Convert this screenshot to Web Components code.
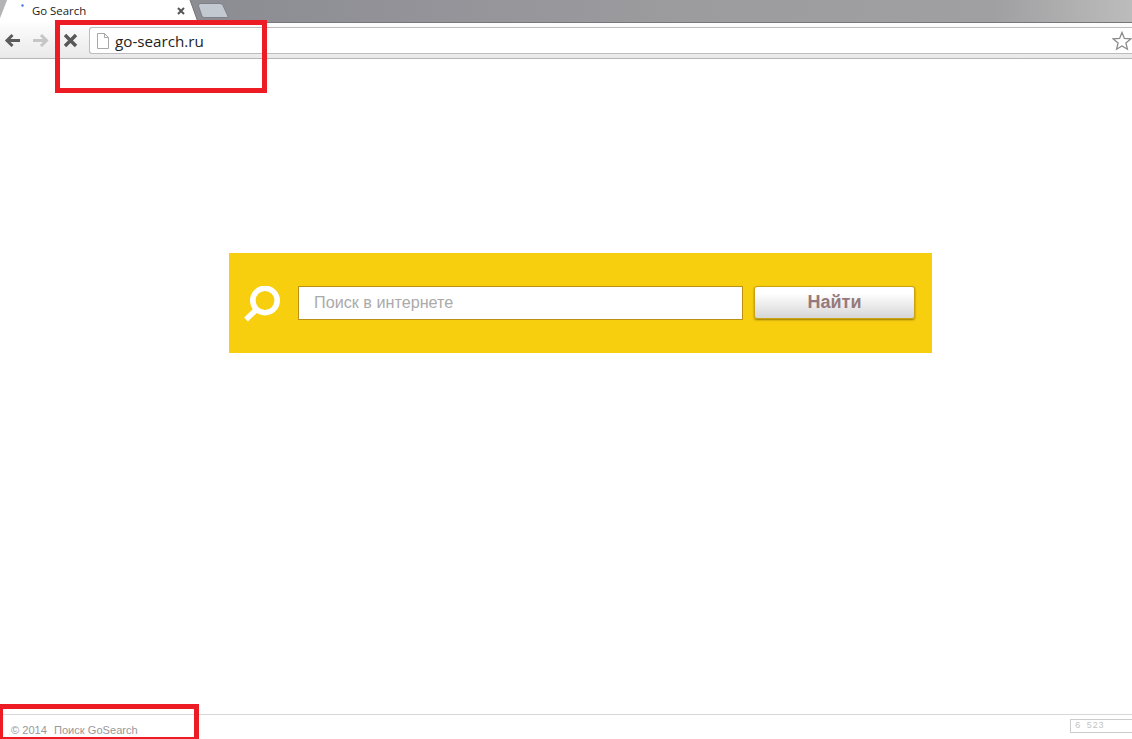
<!DOCTYPE html>
<html>
<head>
<meta charset="utf-8">
<title>Go Search</title>
<style>
    html, body { margin: 0; height: 100%; overflow: hidden; background: #fff; }
    body { display: flex; flex-direction: column; height: 739px; font-family: "Liberation Sans", Arial, sans-serif; }
</style>
</head>
<body>
<browser-bar url="go-search.ru" tab="Go Search"></browser-bar>
<search-page>
    <search-panel placeholder="Поиск в интернете" action="Найти"></search-panel>
</search-page>
<page-footer copy="© 2014" link="Поиск GoSearch" count="6 523"></page-footer>
<red-box style="left:55px;top:20px;width:212px;height:73px"></red-box>
<red-box style="left:-2px;top:704px;width:201px;height:38px"></red-box>

<script>
class BrowserBar extends HTMLElement {
    connectedCallback() {
        this.attachShadow({ mode: 'open' });
        this.shadowRoot.innerHTML = `
            <style>
                :host { display: block; flex: none; height: 59px; font-family: "Open Sans", "Noto Sans", sans-serif; }
                .strip {
                    height: 23px;
                    box-sizing: border-box;
                    border-bottom: 1px solid #77777b;
                    background: linear-gradient(90deg, #88888f 0%, #8e8e95 25%, #9c9c9f 60%, #a0a0a2 88%, #bcbcbc 100%);
                    position: relative;
                }
                .tabs { display: block; position: absolute; left: 0; top: 0; }
                .title {
                    position: absolute; left: 32px; top: 3px;
                    font-size: 11.4px; line-height: 16px; color: #222;
                }
                .toolbar {
                    height: 35px;
                    box-sizing: border-box;
                    display: flex;
                    align-items: center;
                    padding-left: 3px;
                    background: linear-gradient(#fdfdfd, #e9e9e9);
                }
                .btn { width: 20px; height: 21px; flex: none; }
                .fwd { margin-left: 8px; }
                .stop { margin-left: 10px; }
                .omni {
                    flex: 1;
                    height: 27px;
                    box-sizing: border-box;
                    margin-left: 8px;
                    display: flex;
                    align-items: center;
                    gap: 6px;
                    padding-left: 7px;
                    background: #fff;
                    border: 1px solid #bdbdbd;
                    border-right: 0;
                    border-radius: 3px 0 0 3px;
                    font-size: 15.2px;
                    color: #222;
                }
                .star { margin-left: auto; flex: none; margin-right: 0; }
                .edge { height: 1px; background: #b4b4b4; }
            </style>
            <div class="strip">
                <svg class="tabs" width="232" height="23" viewBox="0 0 232 23">
                    <path d="M0 0H7L0 18Z" fill="#b4b4b6"/>
                    <path d="M0 23V18L7 0H190L198 23Z" fill="#fff"/>
                    <path d="M190 0L198 22" fill="none" stroke="#77777b"/>
                    <path d="M201 3.500H220Q222 3.500 223 5.500L228.500 17.500H204Q202.500 17.500 202 16L198.500 6Q198 3.500 201 3.500Z" fill="#c3c9d1" stroke="#80808a"/>
                    <circle cx="22.500" cy="5.500" r="1.200" fill="#3f7fe0"/>
                    <path d="M178 8l6 6m0-6l-6 6" stroke="#555" stroke-width="2"/>
                </svg>
                <div class="title">${this.getAttribute('tab')}</div>
            </div>
            <div class="toolbar">
                <svg class="btn" viewBox="0 0 20 21"><path d="M17 10.500H4M9.500 5L4 10.500l5.500 5.500" fill="none" stroke="#5c5c5c" stroke-width="3"/></svg>
                <svg class="btn fwd" viewBox="0 0 20 21"><path d="M2 10.500H15.500M10 5l5.500 5.500L10 16" fill="none" stroke="#c6c6c6" stroke-width="3"/></svg>
                <svg class="btn stop" viewBox="0 0 20 21"><path d="M4 5L15 16M15 5L4 16" fill="none" stroke="#585858" stroke-width="3.400"/></svg>
                <div class="omni">
                    <svg width="12" height="16" viewBox="0 0 12 16"><path d="M.5 .5H7.500L11.500 4.500V15.500H.5Z M7.500 .5V4.500H11.500" fill="#fff" stroke="#a8a8a8"/></svg>
                    <span>${this.getAttribute('url')}</span>
                    <svg class="star" width="20" height="20" viewBox="0 0 20 20"><path d="M10 1.500L12.400 7.400 18.700 7.900 13.900 12 15.400 18.200 10 14.900 4.600 18.200 6.100 12 1.300 7.900 7.600 7.400Z" fill="#fff" stroke="#8a8a8a" stroke-width="1.300"/></svg>
                </div>
            </div>
            <div class="edge"></div>
        `;
    }
}

class SearchPage extends HTMLElement {
    connectedCallback() {
        this.attachShadow({ mode: 'open' });
        this.shadowRoot.innerHTML = `
            <style>
                :host { display: block; flex: 1; padding: 194px 0 0 229px; background: #fff; }
            </style>
            <slot></slot>
        `;
    }
}

class SearchPanel extends HTMLElement {
    connectedCallback() {
        this.attachShadow({ mode: 'open' });
        this.shadowRoot.innerHTML = `
            <style>
                :host {
                    display: flex;
                    width: 703px;
                    height: 100px;
                    box-sizing: border-box;
                    padding: 33px 17px 33px 15px;
                    background: #f7cf0f;
                    font-family: "Liberation Sans", Arial, sans-serif;
                }
                svg { flex: none; margin-right: 18px; }
                .field {
                    flex: none;
                    width: 445px;
                    box-sizing: border-box;
                    height: 34px;
                    background: #fff;
                    border: 1px solid #bb9013;
                    padding-left: 15px;
                    font-size: 16.2px;
                    line-height: 30px;
                    color: #aaa;
                }
                .go {
                    flex: none;
                    width: 161px;
                    height: 33px;
                    margin-left: 11px;
                    box-sizing: border-box;
                    text-align: center;
                    font-size: 18px;
                    font-weight: bold;
                    line-height: 30px;
                    color: #96797c;
                    border: 1px solid #c9a215;
                    border-radius: 3px;
                    background: linear-gradient(#ffffff 20%, #d6d6d6);
                    box-shadow: 0 1px 2px rgba(110, 85, 0, .7);
                }
            </style>
            <svg width="36" height="36" viewBox="0 0 36 36">
                <circle cx="21" cy="14.500" r="12.200" fill="none" stroke="#fff" stroke-width="5.600"/>
                <path d="M12.500 23.500L2 33.500" stroke="#fff" stroke-width="5.500"/>
            </svg>
            <div class="field">${this.getAttribute('placeholder')}</div>
            <div class="go">${this.getAttribute('action')}</div>
        `;
    }
}

class PageFooter extends HTMLElement {
    connectedCallback() {
        this.attachShadow({ mode: 'open' });
        this.shadowRoot.innerHTML = `
            <style>
                :host {
                    display: flex;
                    flex: none;
                    height: 25px;
                    box-sizing: border-box;
                    align-items: flex-start;
                    border-top: 1px solid #d8d8d8;
                    font-family: "Liberation Sans", Arial, sans-serif;
                    font-size: 11.1px;
                    color: #999;
                    padding-left: 11px;
                }
                .copy { margin-top: 9px; line-height: 13px; }
                .link { margin: 9px 0 0 7px; line-height: 13px; }
                .count {
                    margin: 4px 0 0 auto;
                    width: 62px;
                    height: 14px;
                    box-sizing: border-box;
                    border: 1px solid #ccc;
                    border-right: 0;
                    padding-left: 4px;
                    font-family: "Liberation Mono", monospace;
                    font-size: 9px;
                    letter-spacing: .4px;
                    line-height: 12px;
                    color: #c4c4c4;
                }
            </style>
            <span class="copy">${this.getAttribute('copy')}</span>
            <span class="link">${this.getAttribute('link')}</span>
            <span class="count">${this.getAttribute('count')}</span>
        `;
    }
}

class RedBox extends HTMLElement {
    connectedCallback() {
        this.attachShadow({ mode: 'open' });
        this.shadowRoot.innerHTML = `
            <style>
                :host { display: block; position: absolute; box-sizing: border-box; border: 5px solid #ed1c24; }
            </style>
        `;
    }
}

customElements.define('browser-bar', BrowserBar);
customElements.define('search-page', SearchPage);
customElements.define('search-panel', SearchPanel);
customElements.define('page-footer', PageFooter);
customElements.define('red-box', RedBox);
</script>
</body>
</html>
